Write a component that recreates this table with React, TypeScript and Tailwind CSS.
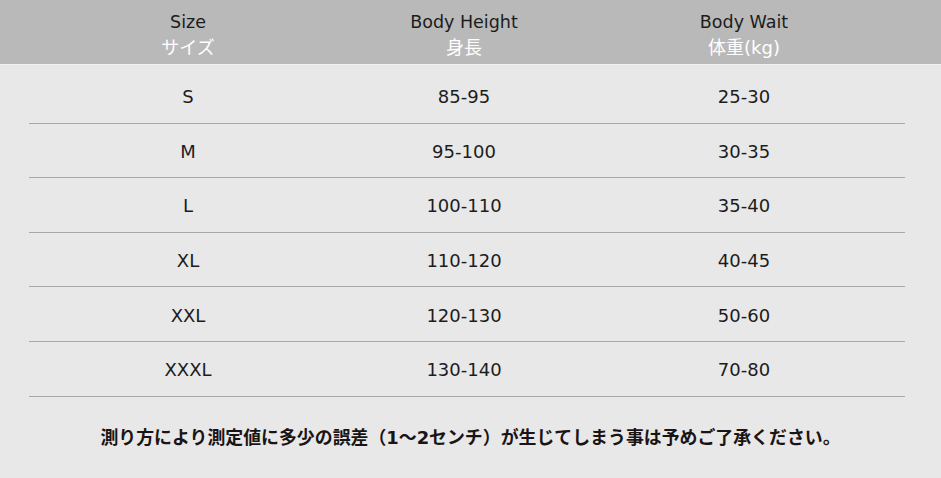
// Size chart table with header bar and footnote

const rows = [
  { size: "S", height: "85-95", weight: "25-30" },
  { size: "M", height: "95-100", weight: "30-35" },
  { size: "L", height: "100-110", weight: "35-40" },
  { size: "XL", height: "110-120", weight: "40-45" },
  { size: "XXL", height: "120-130", weight: "50-60" },
  { size: "XXXL", height: "130-140", weight: "70-80" },
];

const cols = "grid grid-cols-[318px_234px_326px]";

export default function App() {
  return (
    <div
      className="h-[478px] w-[941px] bg-[#e8e8e8] text-[#1c1c1c]"
      style={{ fontFamily: '"DejaVu Sans", "Noto Sans CJK JP", sans-serif' }}
    >
      {/* ---- Header ---- */}
      <div className="h-[65px] border-b border-[#f0f0f0] bg-[#b9b9b9] pl-[29px] pr-[36px] pt-[10px]">
        <div className={`${cols} text-center text-[17.5px] leading-[25px]`}>
          <div>
            <div>Size</div>
            <div className="text-[18px] text-white">サイズ</div>
          </div>
          <div>
            <div>Body Height</div>
            <div className="text-[18px] text-white">身長</div>
          </div>
          <div>
            <div>Body Wait</div>
            <div className="text-[18px] text-white">体重(kg)</div>
          </div>
        </div>
      </div>

      {/* ---- Rows ---- */}
      <div className="pl-[29px] pr-[36px] pt-[4px]">
        {rows.map((r) => (
          <div
            key={r.size}
            className={`${cols} h-[54.6px] items-center border-b border-[#a8a8a8] pt-[2px] text-center text-[18px]`}
          >
            <div>{r.size}</div>
            <div>{r.height}</div>
            <div>{r.weight}</div>
          </div>
        ))}
      </div>

      {/* ---- Note ---- */}
      <p className="pt-[28px] text-center text-[17.9px] font-bold text-[#1a1414]">
        測り方により測定値に多少の誤差（1〜2センチ）が生じてしまう事は予めご了承ください。
      </p>
    </div>
  );
}
